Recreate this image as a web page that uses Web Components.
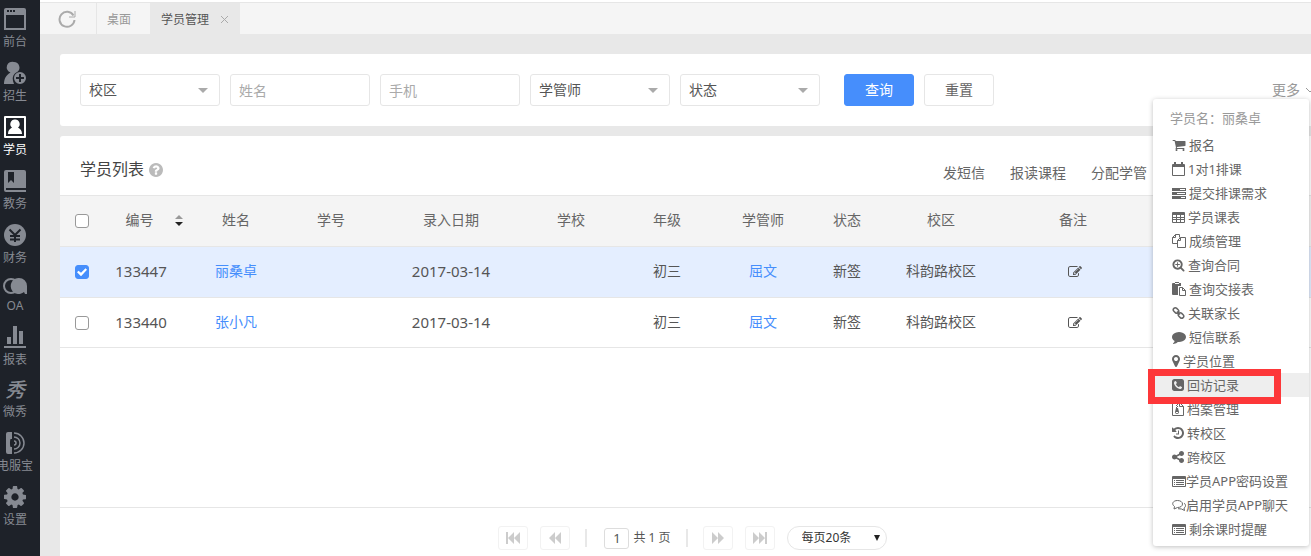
<!DOCTYPE html>
<html lang="zh-CN">
<head>
<meta charset="utf-8">
<title>学员管理</title>
<style>
  html, body {
    margin: 0;
    height: 100%;
    overflow: hidden;
  }
  body {
    --line: #e6e6e6;
    --blue: #468efc;
    --page: #e8e8e8;
    background: var(--page);
    color: #555;
    font: 14px/20px "Noto Sans", "Noto Sans CJK SC", sans-serif;
  }
</style>
</head>
<body>
<app-shell>
  <side-nav slot="nav">
    <nav-item icon="window">前台</nav-item>
    <nav-item icon="recruit">招生</nav-item>
    <nav-item icon="student" active>学员</nav-item>
    <nav-item icon="book">教务</nav-item>
    <nav-item icon="yen">财务</nav-item>
    <nav-item icon="oa">OA</nav-item>
    <nav-item icon="chart">报表</nav-item>
    <nav-item icon="show">微秀</nav-item>
    <nav-item icon="phone">电服宝</nav-item>
    <nav-item icon="gear">设置</nav-item>
  </side-nav>
  <tab-bar></tab-bar>
  <filter-panel></filter-panel>
  <student-list></student-list>
  <student-menu slot="menu" student="丽桑卓"></student-menu>
</app-shell>

<script>
/* ---------- icons ---------- */

// sidebar icons: [height, markup], all 22 wide
const NAV_ICONS = {
  window: [22, `<path fill-rule="evenodd" d="M2 0h18a2 2 0 0 1 2 2v20H0V2a2 2 0 0 1 2-2zM2 7v13h18V7zM3 2v2h2V2zm3 0v2h2V2zm3 0v2h2V2z"/>`],
  recruit: [22, `<path d="M10 0a5.500 5.500 0 0 1 3.500 9.700A7.500 7.500 0 0 0 9 19l1 3H0c0-5 2-9 6.500-11.500A5.500 5.500 0 0 1 10 0z"/><path fill-rule="evenodd" d="M16 10a6 6 0 1 0 0 12 6 6 0 0 0 0-12zm-1 2h2v3h3v2h-3v3h-2v-3h-3v-2h3z"/>`],
  student: [22, `<path fill-rule="evenodd" d="M1 0h20a1 1 0 0 1 1 1v20a1 1 0 0 1-1 1H1a1 1 0 0 1-1-1V1a1 1 0 0 1 1-1zm1 2v18h18V2z"/><path d="M11 3.500a4.500 4.500 0 0 1 3 8c2.500 1.500 4 3 4 6.500H4c0-3.500 1.500-5 4-6.500a4.500 4.500 0 0 1 3-8z"/>`],
  book: [22, `<path fill-rule="evenodd" d="M2 0h18a2 2 0 0 1 2 2v16H0V2a2 2 0 0 1 2-2zm2 2v11l3-3 3 3V2z"/><path d="M0 18h2v2h20v2H2a2 2 0 0 1-2-2z"/>`],
  yen: [22, `<circle cx="11" cy="11" r="11"/><path d="M5.500 5.500L11 11l5.500-5.500M11 11v7M6 12h10M6 15.500h10" fill="none" stroke="#1e2229" stroke-width="2"/>`],
  oa: [16, `<circle cx="7" cy="8" r="7" fill="none" stroke="currentColor" stroke-width="2"/><path d="M15 0a8 8 0 0 1 8 8v8h-2l-1-2a8 8 0 1 1-5-14z"/>`],
  chart: [22, `<path d="M3 11h4v7H3zM9 0h4v18H9zM15 5h4v13h-4zM0 20h22v2H0z"/>`],
  phone: [22, `<path d="M4 0h4v7H6.500c-.7 2-.7 6 0 8H8v7H4a2 2 0 0 1-2-2V2a2 2 0 0 1 2-2z"/><path d="M10 9a2 2 0 0 1 0 4M10 5a6 6 0 0 1 0 12M10 1a10 10 0 0 1 0 20" fill="none" stroke="currentColor" stroke-width="1.500"/>`],
  gear: [22, `<path transform="translate(-1.830 -1.830) scale(.01432)" d="M1152 896q0-106-75-181t-181-75-181 75-75 181 75 181 181 75 181-75 75-181zm512-109v222q0 12-8 23t-20 13l-185 28q-19 54-39 91 35 50 107 138 10 12 10 25t-9 23q-27 37-99 108t-94 71q-12 0-26-9l-138-108q-44 23-91 38-16 136-29 186-7 28-36 28h-222q-14 0-24.500-8.500t-11.500-21.500l-28-184q-49-16-90-37l-141 107q-10 9-25 9-14 0-25-11-126-114-165-168-7-10-7-23 0-12 8-23 15-21 51-66.500t54-70.500q-27-50-41-99l-183-27q-13-2-21-12.500t-8-23.500v-222q0-12 8-23t19-13l186-28q14-46 39-92-40-57-107-138-10-12-10-24 0-10 9-23 26-36 98.500-107.500t94.500-71.500q13 0 26 10l138 107q44-23 91-38 16-136 29-186 7-28 36-28h222q14 0 24.500 8.500t11.500 21.500l28 184q49 16 90 37l142-107q9-9 24-9 13 0 25 10 129 119 165 170 7 8 7 22 0 12-8 23-15 21-51 66.500t-54 70.500q26 50 41 98l183 28q13 2 21 12.500t8 23.500z"/>`]
}

// small icons: [viewBox, width, markup], all 14 high
const BIG = "0 0 1792 1792"
const ICONS = {
  cart: [BIG, 14, `<path d="M704 1536q0 52-38 90t-90 38-90-38-38-90 38-90 90-38 90 38 38 90zm896 0q0 52-38 90t-90 38-90-38-38-90 38-90 90-38 90 38 38 90zm128-1088v512q0 24-16.500 42.500t-40.500 21.500l-1044 122q13 60 13 70 0 16-24 64h920q26 0 45 19t19 45-19 45-45 19h-1024q-26 0-45-19t-19-45q0-11 8-31.500t16-36 21.500-40 15.500-29.500l-177-823h-204q-26 0-45-19t-19-45 19-45 45-19h256q16 0 28.500 6.500t19.500 15.500 13 24.500 8 26 5.500 29.500 4.500 26h1201q26 0 45 19t19 45z"/>`],
  calendar: ["0 0 13 14", 13, `<path fill-rule="evenodd" d="M1 2h1V0h2v2h5V0h2v2h1a1 1 0 0 1 1 1v10a1 1 0 0 1-1 1H1a1 1 0 0 1-1-1V3a1 1 0 0 1 1-1zm0 3v8h11V5z"/>`],
  server: ["0 0 14 14", 14, `<path fill-rule="evenodd" d="M0 2h14v3H0zM0 6h14v3H0zM0 10h14v3H0zM8 3v1h5V3zM5 7v1h8V7zM9 11v1h4v-1z"/>`],
  table: ["0 0 13 14", 13, `<path fill-rule="evenodd" d="M1 2h11a1 1 0 0 1 1 1v9a1 1 0 0 1-1 1H1a1 1 0 0 1-1-1V3a1 1 0 0 1 1-1zm0 3v2h3V5zm4 0v2h3V5zm4 0v2h3V5zM1 8v1h3V8zm4 0v1h3V8zm4 0v1h3V8zm-8 2v2h3v-2zm4 0v2h3v-2zm4 0v2h3v-2z"/>`],
  copy: ["0 0 14 14", 14, `<path d="M5.500 9.500h-5v-6l3-3h4v3M3.500.5v3h-3M8.500 3.500h5v10h-8v-7zM8.500 3.500v3h-3" fill="none" stroke="currentColor"/>`],
  zoom: [BIG, 13, `<path d="M1088 800v64q0 13-9.500 22.500t-22.500 9.500h-224v224q0 13-9.500 22.500t-22.500 9.500h-64q-13 0-22.500-9.500t-9.500-22.500v-224h-224q-13 0-22.500-9.500t-9.500-22.500v-64q0-13 9.500-22.500t22.500-9.500h224v-224q0-13 9.500-22.500t22.500-9.500h64q13 0 22.500 9.500t9.500 22.500v224h224q13 0 22.500 9.500t9.500 22.500zm128 32q0-185-131.500-316.500t-316.500-131.500-316.500 131.500-131.500 316.500 131.500 316.500 316.500 131.500 316.500-131.500 131.500-316.500zm512 832q0 53-37.500 90.500t-90.500 37.500q-54 0-90-38l-343-342q-179 124-399 124-143 0-273.500-55.500t-225-150-150-225-55.500-273.500 55.500-273.500 150-225 225-150 273.500-55.500 273.500 55.500 225 150 150 225 55.500 273.500q0 220-124 399l343 343q37 37 37 90z"/>`],
  paste: ["0 0 14 14", 14, `<path fill-rule="evenodd" d="M1 1h2V0h4v1h2v3H6v9H1a1 1 0 0 1-1-1V2a1 1 0 0 1 1-1zm2 0v1h4V1z"/><path d="M7.500 5.500h3l3 3v5h-6zM10.500 5.500v3h3" fill="none" stroke="currentColor"/>`],
  link: ["0 0 13 14", 13, `<g fill="none" stroke="currentColor" stroke-width="1.500"><rect x="1" y="2.500" width="6" height="4" rx="2" transform="rotate(45 4 4.500)"/><rect x="6" y="7.500" width="6" height="4" rx="2" transform="rotate(45 9 9.500)"/><path d="M5 5.500l3 3"/></g>`],
  comment: [BIG, 14, `<path d="M1792 896q0 174-120 321.500t-326 233-450 85.500q-70 0-145-8-198 175-460 242-49 14-114 22-17 2-30.500-9t-17.500-29v-1q-3-4-.5-12t2-10 4.500-9.500l6-9 7-8.500 8-9q7-8 31-34.500t34.500-38 31-39.500 32.500-51 27-59 26-76q-157-89-247.500-220t-90.500-281q0-130 71-248.500t191-204.500 286-136.500 348-50.500q244 0 450 85.500t326 233 120 321.500z"/>`],
  marker: ["384 0 1024 1792", 8, `<path d="M1152 640q0-106-75-181t-181-75-181 75-75 181 75 181 181 75 181-75 75-181zm256 0q0 109-33 179l-364 774q-16 33-47.500 52t-67.500 19-67.500-19-46.500-52l-365-774q-33-70-33-179 0-212 150-362t362-150 362 150 150 362z"/>`],
  phonesq: ["128 0 1536 1792", 12, `<path d="M1408 1193q0-11-2-16t-18-16.500-40.500-25-47.500-26.500-45.500-25-28.500-15q-5-3-19-13t-25-15-21-5q-15 0-36.500 20.500t-39.500 45-38.500 45-33.500 20.500q-7 0-16.500-3.500t-15.500-6.500-17-9.500-14-8.500q-99-55-170-126.500t-127-170.500q-2-3-8.500-14t-9.500-17-6.500-15.500-3.500-16.500q0-13 20.500-33.500t45-38.500 45-39.500 20.500-36.500q0-10-5-21t-15-25-13-19q-3-6-15-28.500t-25-45.500-26.500-47.500-25-40.500-16.500-18-16-2q-48 0-101 22-46 21-80 94.500t-34 130.500q0 16 2.500 34t5 30.500 9 33 10 29.500 12.500 33 11 30q60 164 216.500 320.500t320.500 216.500q6 2 30 11t33 12.500 29.500 10 33 9 30.500 5 34 2.500q57 0 130.500-34t94.500-80q22-53 22-101zm256-777v960q0 119-84.500 203.500t-203.500 84.500h-960q-119 0-203.500-84.500t-84.500-203.500v-960q0-119 84.500-203.500t203.500-84.500h960q119 0 203.500 84.500t84.500 203.500z"/>`],
  zip: ["0 0 12 14", 12, `<path d="M.5.5h7l4 4v9H.5zM7.500.5v4h4M4.500 1v1M5.500 2v1M4.500 3v1M5.500 4v1M4.500 5v2" fill="none" stroke="currentColor"/><path fill-rule="evenodd" d="M4 6h2l1 4a2 2 0 1 1-4 0zm0 4v1h2v-1z"/>`],
  history: ["128 0 1536 1792", 12, `<path d="M1664 896q0 156-61 298t-164 245-245 164-298 61q-172 0-327-72.500t-264-204.500q-7-10-6.500-22.500t8.500-20.500l137-138q10-9 25-9 16 2 23 12 73 95 179 147t225 52q104 0 198.500-40.500t163.500-109.500 109.500-163.500 40.500-198.500-40.500-198.500-109.500-163.500-163.500-109.500-198.500-40.500q-98 0-188 35.500t-160 101.500l137 138q31 30 14 69-17 40-59 40h-448q-26 0-45-19t-19-45v-448q0-42 40-59 39-17 69 14l130 129q107-101 244.500-156.500t284.500-55.500q156 0 298 61t245 164 164 245 61 298zm-640-288v448q0 14-9 23t-23 9h-320q-14 0-23-9t-9-23v-64q0-14 9-23t23-9h224v-352q0-14 9-23t23-9h64q14 0 23 9t9 23z"/>`],
  share: ["128 0 1536 1792", 12, `<path d="M1344 1024q133 0 226.500 93.500t93.500 226.500-93.500 226.500-226.500 93.500-226.500-93.500-93.500-226.500q0-12 2-34l-360-180q-92 86-218 86-133 0-226.500-93.500t-93.500-226.500 93.500-226.500 226.500-93.500q126 0 218 86l360-180q-2-22-2-34 0-133 93.500-226.500t226.500-93.500 226.500 93.500 93.500 226.500-93.500 226.500-226.500 93.500q-126 0-218-86l-360 180q2 22 2 34t-2 34l360 180q92-86 218-86z"/>`],
  list: ["0 0 14 14", 14, `<path fill-rule="evenodd" d="M1 2h12a1 1 0 0 1 1 1v9a1 1 0 0 1-1 1H1a1 1 0 0 1-1-1V3a1 1 0 0 1 1-1zm0 3v7h12V5z"/><path d="M2 6h1v1H2zm2 0h8v1H4zM2 8h1v1H2zm2 0h8v1H4zM2 10h1v1H2zm2 0h8v1H4z"/>`],
  chat: ["0 0 14 14", 14, `<path d="M5.500 2.500c3 0 5 1.500 5 3.500s-2 3.500-5 3.500L2 11l.5-2.500C-1 6 1 2.500 5.500 2.500zM12 5c2 1.500 2 4 0 5l.5 2.500L9.500 11 6 10.700" fill="none" stroke="currentColor"/>`],
  edit: [BIG, 14, `<path d="M888 1184l116-116-152-152-116 116v56h96v96h56zm440-720q-16-16-33 1l-350 350q-17 17-1 33t33-1l350-350q17-17 1-33zm80 594v190q0 119-84.500 203.500t-203.500 84.500h-832q-119 0-203.500-84.500t-84.500-203.500v-832q0-119 84.500-203.500t203.500-84.500h832q63 0 117 25 15 7 18 23 3 17-9 29l-49 49q-14 14-32 8-23-6-45-6h-832q-66 0-113 47t-47 113v832q0 66 47 113t113 47h832q66 0 113-47t47-113v-126q0-13 9-22l64-64q15-15 35-7t20 29zm-96-738l288 288-672 672h-288v-288zm444 132l-92 92-288-288 92-92q28-28 68-28t68 28l152 152q28 28 28 68t-28 68z"/>`],
  first: ["0 0 16 12", 16, `<path d="M1 0h2v12H1zM9 0v12L3 6zM15 0v12L9 6z"/>`],
  prev: ["0 0 16 12", 16, `<path d="M8 0v12L2 6zM14 0v12L8 6z"/>`],
  next: ["0 0 16 12", 16, `<path d="M2 0v12l6-6zM8 0v12l6-6z"/>`],
  last: ["0 0 16 12", 16, `<path d="M1 0v12l6-6zM7 0v12l6-6zM13 0h2v12h-2z"/>`]
}

function icon(name) {
  const [box, width, body] = ICONS[name]
  return `<svg viewBox="${box}" width="${width}" height="14" fill="currentColor" aria-hidden="true">${body}</svg>`
}

function define(name, html, setup) {
  customElements.define(name, class extends HTMLElement {
    constructor() {
      super()
      this.attachShadow({ mode: "open" })
    }
    connectedCallback() {
      this.shadowRoot.innerHTML = typeof html === "function" ? html(this) : html
      if (setup) setup(this, this.shadowRoot)
    }
  })
}

/* ---------- layout ---------- */

define("app-shell", `
  <style>
    :host { display: flex; height: 100%; min-height: 100vh; position: relative; overflow: hidden; }
    main { flex: 1; min-width: 0; display: flex; flex-direction: column; }
    ::slotted(student-menu) { position: absolute; top: 99px; right: 2px; }
  </style>
  <slot name="nav"></slot>
  <main><slot></slot></main>
  <slot name="menu"></slot>
`)

define("side-nav", `
  <style>
    :host { display: block; flex: none; width: 40px; background: #1e2229; }
    nav { width: 30px; }
  </style>
  <nav><slot></slot></nav>
`)

define("nav-item", el => {
  const name = el.getAttribute("icon")
  const art = NAV_ICONS[name]
  const pic = art
    ? `<svg viewBox="0 0 22 ${art[0]}" width="22" height="${art[0]}" fill="currentColor" aria-hidden="true">${art[1]}</svg>`
    : `<span class="mark">秀</span>`
  return `
  <style>
    :host { display: block; }
    a {
      display: flex; flex-direction: column; align-items: center; gap: 4px;
      padding: 8px 0 4px; color: #868a92; text-decoration: none;
      font-size: 12px; line-height: 16px; white-space: nowrap;
    }
    :host([active]) a { color: #fff; }
    svg { display: block; overflow: visible; }
    .mark { font-size: 20px; line-height: 20px; font-style: italic; font-weight: 500; }
  </style>
  <a href="#">${pic}<slot></slot></a>`
})

define("tab-bar", `
  <style>
    :host { display: flex; height: 31px; border-top: 1px solid var(--line); background: #f5f5f5; box-shadow: 0 -2px #fff; margin-top: 2px; font-size: 12px; }
    button { border: 0; padding: 0; background: none; color: #999; display: flex; align-items: center; justify-content: center; }
    .refresh { width: 57px; padding-right: 3px; border-right: 1px solid var(--line); }
    a { display: flex; align-items: center; padding: 2px 10px 0; color: #999; text-decoration: none; }
    .home { width: 33px; }
    .current { gap: 11px; padding: 2px 11px 0; background: var(--page); color: #555; }
  </style>
  <button class="refresh" aria-label="刷新"><svg width="18" height="18" fill="none" stroke="#aaa" stroke-width="2"><path d="M15.500 5.500A7.500 7.500 0 1 0 16.500 10"/><path d="M17 1v6h-6" stroke-width="1"/></svg></button>
  <a class="home" href="#">桌面</a>
  <a class="current" href="#">学员管理<svg width="9" height="9" stroke="#aaa"><path d="M1 1l7 7M8 1l-7 7"/></svg></a>
`)

/* ---------- filters ---------- */

define("drop-down", el => `
  <style>
    :host { display: inline-grid; width: 140px; }
    select, svg { grid-area: 1 / 1; }
    select {
      appearance: none; box-sizing: border-box; width: 100%; height: 32px; padding: 0 8px;
      border: 1px solid var(--line); border-radius: 3px; background: #fff;
      color: #555; font: inherit;
    }
    svg { place-self: center end; margin-right: 12px; pointer-events: none; }
    :host([small]) { width: 100px; }
    :host([small]) select { height: 24px; padding: 0 14px; border-radius: 12px; font-size: 12px; color: #333; }
    :host([small]) svg { margin-right: 7px; }
  </style>
  <select aria-label="${el.getAttribute("label")}"><option>${el.getAttribute("label")}</option></select>
  ${el.hasAttribute("small")
    ? `<svg width="6" height="6" fill="#222"><path d="M0 0h6L3 6z"/></svg>`
    : `<svg width="10" height="5" fill="#aaa"><path d="M0 0h10L5 5z"/></svg>`}
`)

define("filter-panel", `
  <style>
    :host {
      display: flex; align-items: center; gap: 10px; margin: 20px 0 0 20px;
      padding: 20px 0 20px 20px; background: #fff; border-radius: 3px 0 0 3px;
    }
    input, button {
      box-sizing: border-box; height: 32px; border: 1px solid var(--line);
      border-radius: 3px; background: #fff; font: inherit;
    }
    input { width: 140px; padding: 0 8px; color: #555; }
    input::placeholder { color: #aaa; opacity: 1; }
    button { width: 70px; padding: 0; color: #666; }
    .primary { margin-left: 14px; border-color: var(--blue); background: var(--blue); color: #fff; }
    .more { display: flex; align-items: center; gap: 5px; margin: 0 -4px 0 auto; color: #999; text-decoration: none; }
  </style>
  <drop-down label="校区"></drop-down>
  <input placeholder="姓名" aria-label="姓名">
  <input placeholder="手机" aria-label="手机">
  <drop-down label="学管师"></drop-down>
  <drop-down label="状态"></drop-down>
  <button class="primary">查询</button>
  <button>重置</button>
  <a class="more" href="#">更多<svg width="10" height="6" fill="none" stroke="#999"><path d="M1 1l4 4 4-4"/></svg></a>
`)

/* ---------- list ---------- */

const STUDENTS = [
  { id: "133447", name: "丽桑卓", date: "2017-03-14", grade: "初三", tutor: "屈文", status: "新签", campus: "科韵路校区", checked: true },
  { id: "133440", name: "张小凡", date: "2017-03-14", grade: "初三", tutor: "屈文", status: "新签", campus: "科韵路校区" }
]

define("student-list", `
  <style>
    :host { flex: 1; display: flex; flex-direction: column; margin: 10px 0 0 20px; background: #fff; border-radius: 3px 0 0 0; }
    header { display: flex; align-items: center; height: 59px; padding: 0 164px 0 20px; }
    h1 { margin: 0; padding-top: 6px; font-size: 16px; font-weight: 400; line-height: 24px; color: #444; }
    .help { margin: 9px 0 0 5px; }
    .actions { display: flex; gap: 25px; margin-left: auto; padding-top: 14px; }
    .actions a { color: #666; text-decoration: none; }
    student-table { flex: 1; }
  </style>
  <header>
    <h1>学员列表</h1>
    <svg class="help" width="14" height="14" viewBox="128 128 1536 1536" fill="#bbb"><path d="M1024 1376v-192q0-14-9-23t-23-9h-192q-14 0-23 9t-9 23v192q0 14 9 23t23 9h192q14 0 23-9t9-23zm256-672q0-88-55.500-163t-138.500-116-170-41q-243 0-371 213-15 24 8 42l132 100q7 6 19 6 16 0 25-12 53-68 86-92 34-24 86-24 48 0 85.500 26t37.500 59q0 38-20 61t-68 45q-63 28-115.500 86.500t-52.500 125.500v36q0 14 9 23t23 9h192q14 0 23-9t9-23q0-19 21.500-49.500t54.500-49.500q32-18 49-28.500t46-35 44.500-48 28-60.500 12.500-81zm384 192q0 209-103 385.500t-279.500 279.500-385.500 103-385.500-103-279.500-279.500-103-385.500 103-385.500 279.500-279.500 385.500-103 385.500 103 279.500 279.500 103 385.500z"/></svg>
    <div class="actions"><a href="#">发短信</a><a href="#">报读课程</a><a href="#">分配学管</a></div>
  </header>
  <student-table></student-table>
  <page-bar></page-bar>
`)

define("student-table", `
  <style>
    :host { display: block; }
    table { width: 100%; table-layout: fixed; border-collapse: collapse; border-top: 1px solid var(--line); }
    th, td { box-sizing: border-box; height: 51px; padding: 0 0 2px; border-bottom: 1px solid var(--line); text-align: center; font-weight: 400; white-space: nowrap; }
    td { height: 50px; }
    thead { background: #f4f4f4; color: #666; }
    .on { background: #e4eeff; }
    .on td { height: 51px; }
    .num { font-size: 15px; }
    td.id { padding-right: 26px; }
    a { color: var(--blue); text-decoration: none; }
    input {
      appearance: none; display: inline-grid; place-content: center; box-sizing: border-box;
      width: 14px; height: 14px; margin: 0; vertical-align: middle;
      border: 1px solid #999; border-radius: 3px; background: #fff;
    }
    input:checked { border-color: var(--blue); background: var(--blue); }
    input:checked::before { content: ""; width: 10px; height: 8px; background: #fff; clip-path: polygon(0 50%, 15% 30%, 40% 55%, 85% 0, 100% 20%, 40% 100%); }
    .sort { display: inline-flex; align-items: center; gap: 21px; padding: 0; border: 0; background: none; color: inherit; font: inherit; }
    .note { padding: 0; border: 0; background: none; color: #555; vertical-align: middle; }
    td .note { margin-left: 4px; }
    svg { display: block; }
  </style>
  <table>
    <colgroup>
      <col width="44"><col width="100"><col width="64"><col width="126"><col width="114"><col width="126">
      <col width="66"><col width="126"><col width="42"><col width="146"><col width="118"><col>
    </colgroup>
    <thead>
      <tr>
        <th><input type="checkbox" aria-label="全选"></th>
        <th><button class="sort">编号<svg width="8" height="11"><path d="M0 4h8L4 0z" fill="#999"/><path d="M0 7h8l-4 4z" fill="#222"/></svg></button></th>
        <th>姓名</th><th>学号</th><th>录入日期</th><th>学校</th><th>年级</th>
        <th>学管师</th><th>状态</th><th>校区</th><th>备注</th><th></th>
      </tr>
    </thead>
    <tbody></tbody>
  </table>
`, (el, root) => {
  root.querySelector("tbody").innerHTML = STUDENTS.map(s => `
    <tr class="${s.checked ? "on" : ""}">
      <td><input type="checkbox" aria-label="${s.name}" ${s.checked ? "checked" : ""}></td>
      <td class="id num">${s.id}</td>
      <td><a href="#">${s.name}</a></td>
      <td></td>
      <td class="num">${s.date}</td>
      <td></td>
      <td>${s.grade}</td>
      <td><a href="#">${s.tutor}</a></td>
      <td>${s.status}</td>
      <td>${s.campus}</td>
      <td><button class="note" aria-label="备注">${icon("edit")}</button></td>
      <td></td>
    </tr>`).join("")
})

define("page-bar", `
  <style>
    :host {
      display: flex; align-items: center; justify-content: center;
      padding: 18px 0 6px 14px; border-top: 1px solid var(--line); font-size: 12px;
    }
    button {
      box-sizing: border-box; width: 30px; height: 24px; padding: 0; display: grid; place-content: center;
      border: 1px solid #f2f2f2; border-radius: 3px; background: #fff; color: #ccc;
    }
    .group { display: flex; gap: 12px; }
    .rule { width: 2px; height: 18px; margin: 0 15px; background: #e8e8e8; }
    label { display: flex; align-items: center; gap: 4px; margin: 0 0 0 2px; }
    input { box-sizing: border-box; width: 25px; height: 21px; padding: 0; border: 1px solid #ddd; border-radius: 3px; text-align: center; color: #555; font: inherit; font-size: 13px; }
    drop-down { margin-left: 12px; }
  </style>
  <div class="group"><button aria-label="首页">${icon("first")}</button><button aria-label="上一页">${icon("prev")}</button></div>
  <span class="rule"></span>
  <label><input value="1">共 1 页</label>
  <span class="rule"></span>
  <div class="group"><button aria-label="下一页">${icon("next")}</button><button aria-label="末页">${icon("last")}</button></div>
  <drop-down small label="每页20条"></drop-down>
`)

/* ---------- context menu ---------- */

// [icon, label, modifier]
const MENU = [
  ["cart", "报名"],
  ["calendar", "1对1排课"],
  ["server", "提交排课需求"],
  ["table", "学员课表"],
  ["copy", "成绩管理"],
  ["zoom", "查询合同"],
  ["paste", "查询交接表"],
  ["link", "关联家长"],
  ["comment", "短信联系"],
  ["marker", "学员位置"],
  ["phonesq", "回访记录", "marked"],
  ["zip", "档案管理"],
  ["history", "转校区"],
  ["share", "跨校区"],
  ["list", "学员APP密码设置", "tight"],
  ["chat", "启用学员APP聊天", "tight"],
  ["list", "剩余课时提醒"]
]

define("student-menu", el => `
  <style>
    :host {
      box-sizing: border-box; width: 156px; padding: 6px 0 5px; font-size: 13px;
      background: #fff; border-radius: 3px; box-shadow: 0 1px 5px rgba(0, 0, 0, .25);
    }
    h2 { margin: 0; padding: 0 17px 2px; font-size: 13px; font-weight: 400; line-height: 26px; color: #999; }
    ul { margin: 0; padding: 0; list-style: none; }
    a { display: flex; align-items: center; gap: 3px; height: 24px; padding-left: 19px; color: #666; text-decoration: none; white-space: nowrap; }
    .tight a { gap: 0; }
    .marked { position: relative; background: #eee; }
    /* red frame drawn over the entry and its neighbours */
    .marked::after { content: ""; position: absolute; z-index: 1; left: -5px; top: -4px; width: 119px; height: 21px; border: 7px solid #fd3739; pointer-events: none; }
    svg { flex: none; }
  </style>
  <h2>学员名：${el.getAttribute("student")}</h2>
  <ul>
    ${MENU.map(([name, label, mod = ""]) => `<li class="${mod}"><a href="#">${icon(name)}${label}</a></li>`).join("")}
  </ul>
`)
</script>
</body>
</html>
